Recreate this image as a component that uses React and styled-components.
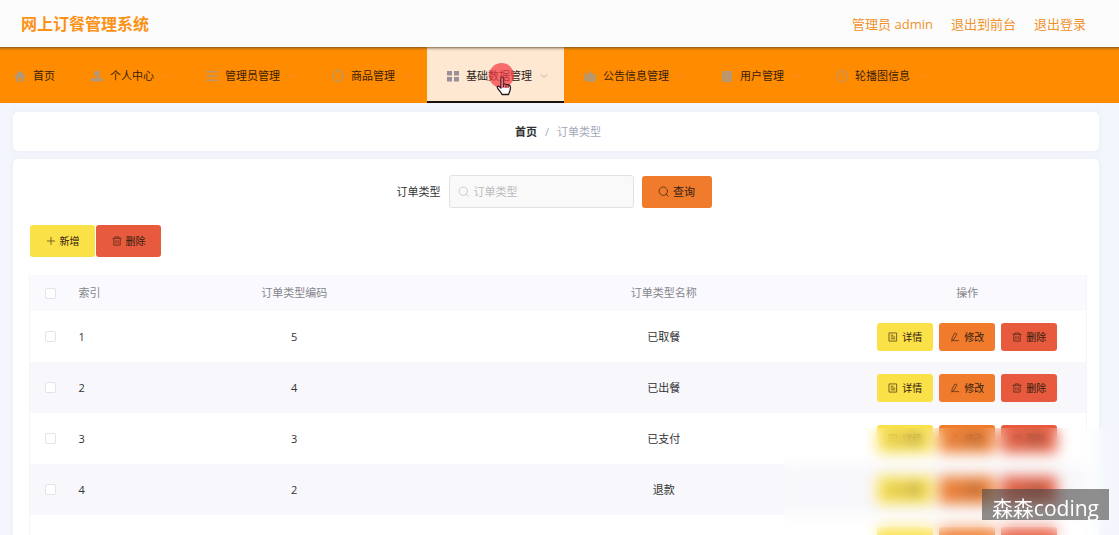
import React from "react";
import styled, { createGlobalStyle, css } from "styled-components";

const Global = createGlobalStyle`
  * { box-sizing: border-box; }
  body {
    margin: 0;
    background: #f3f6fc;
    color: #333;
    font: 11px/16px "Open Sans", "Noto Sans CJK SC", sans-serif;
  }
  a { color: inherit; text-decoration: none; }
  button, input { font: inherit; color: inherit; }
`;

const Shell = styled.div`
  height: 100vh;
  overflow: hidden;
`;

const Header = styled.header`
  display: flex;
  align-items: center;
  justify-content: space-between;
  height: 47px;
  padding: 0 33px 0 21px;
  background: #fdfcfd;
  color: #f0922b;
`;

const Title = styled.h1`
  margin: 0;
  font-size: 16px;
  line-height: 24px;
  font-weight: 700;
  color: #fb9216;
`;

const Account = styled.div`
  display: flex;
  gap: 18px;
  font-size: 13px;
  line-height: 20px;
`;

const Nav = styled.nav`
  display: flex;
  height: 56px;
  background: linear-gradient(#8a5a1c, #e07d08 2px, #ff8c00 4px);
`;

const NavItem = styled.a`
  position: relative;
  display: flex;
  align-items: center;
  flex: none;
  padding: 2px 16px 0 ${(p) => (p.$first ? 13 : 19)}px;
  color: #3a1d08;
  white-space: nowrap;
  ${(p) =>
    p.$active &&
    css`
      background: linear-gradient(transparent 54px, #1b1210 54px),
        linear-gradient(#8a7358, #e2cbb3 2px, #ffe8d1 4px);
      color: #2d2422;
    `}
`;

const NavIcon = styled.svg`
  width: 14px;
  height: 14px;
  margin-right: 6px;
  color: ${(p) => (p.$active ? "#9a8f9b" : "#b79672")};
`;

const Chevron = styled.svg`
  width: 8px;
  height: 8px;
  margin-left: 8px;
  color: ${(p) => (p.$active ? "#c3aa9b" : "#f98f2c")};
`;

const ClickDot = styled.span`
  position: absolute;
  top: 16px;
  left: 62px;
  width: 25px;
  height: 25px;
  border-radius: 50%;
  background: rgba(245, 55, 65, 0.7);
`;

const Pointer = styled.svg`
  position: absolute;
  top: 29px;
  left: 69px;
  width: 16px;
  height: 20px;
`;

const Main = styled.main`
  display: flex;
  flex-direction: column;
  gap: 8px;
  padding: 9px 20px 0 13px;
`;

const Card = styled.section`
  border-radius: 5px;
  background: #fff;
  box-shadow: 0 0 5px rgba(225, 232, 240, 0.5);
`;

const Crumbs = styled(Card)`
  display: flex;
  align-items: center;
  justify-content: center;
  gap: 8px;
  height: 39px;
  padding-left: 4px;
  color: #a3a7b8;
`;

const HomeLink = styled.a`
  font-weight: 700;
  color: #303133;
`;

const Panel = styled(Card)`
  padding: 16px 12px 0 16px;
`;

const SearchForm = styled.form`
  display: flex;
  align-items: center;
  justify-content: center;
  gap: 8px;
  height: 33px;
  padding-right: 8px;
`;

const SearchBox = styled.div`
  display: flex;
  align-items: center;
  gap: 5px;
  width: 185px;
  height: 33px;
  padding: 0 8px;
  border: 1px solid #e3e1e1;
  border-radius: 3px;
  background: #faf9f9;
  color: #b9babf;
`;

const SearchInput = styled.input`
  flex: 1;
  min-width: 0;
  padding: 0;
  border: 0;
  outline: 0;
  background: none;
  &::placeholder { color: #b9babf; }
`;

const fills = { yellow: "#fbe148", orange: "#f07b2c", red: "#e85a3d" };
const sizes = {
  search: css`width: 70px; height: 32px; font-size: 11px;`,
  tool: css`width: 65px; height: 32px; font-size: 10px;`,
  row: css`width: 56px; height: 28px; font-size: 10px;`,
};

const Button = styled.button`
  display: flex;
  align-items: center;
  justify-content: center;
  gap: 4px;
  padding: 0;
  border: 0;
  border-radius: 3px;
  background: ${(p) => fills[p.$fill]};
  color: #33200f;
  white-space: nowrap;
  cursor: pointer;
  ${(p) => sizes[p.$size]}
`;

const SmallIcon = styled.svg`
  flex: none;
  width: ${(p) => p.$size || 10}px;
  height: ${(p) => p.$size || 10}px;
  opacity: 0.7;
`;

const Toolbar = styled.div`
  display: flex;
  gap: 1px;
  margin: 17px 0 18px 1px;
`;

const Table = styled.table`
  width: 100%;
  table-layout: fixed;
  border-collapse: collapse;
  border-left: 1px solid #f5f4f9;
  border-right: 1px solid #f5f4f9;
`;

const HeadRow = styled.tr`
  height: 36px;
  background: #faf9fd;
  color: #85868c;
`;

const Row = styled.tr`
  height: 51px;
  background: ${(p) => (p.$striped ? "#f8f7fb" : "#fff")};
`;

const cell = css`
  padding: 0 7px;
  font-weight: 400;
  text-align: ${(p) => (p.$left ? "left" : "center")};
  width: ${(p) => (p.$width ? `${p.$width}px` : "auto")};
`;
const Th = styled.th`${cell}`;
const Td = styled.td`${cell}`;

const Check = styled.input`
  display: block;
  appearance: none;
  width: 11px;
  height: 11px;
  margin: 0 auto;
  border: 1px solid #e4e3ea;
  border-radius: 2px;
  background: #fff;
`;

const Actions = styled.div`
  display: flex;
  justify-content: center;
  gap: 6px;
`;

const Haze = styled.div`
  position: fixed;
  right: 0;
  bottom: 0;
  width: 30%;
  height: 20vh;
  background: rgba(255, 255, 255, 0.08);
  backdrop-filter: blur(7px);
`;

const Badge = styled.div`
  position: fixed;
  right: 10px;
  bottom: 15px;
  height: 31px;
  padding: 5px 10px 0;
  background: rgba(70, 70, 70, 0.6);
  color: #fff;
  font-size: 21px;
  line-height: 28px;
`;

const stroke = { fill: "none", stroke: "currentColor", strokeLinecap: "round", strokeLinejoin: "round" };

const navShapes = {
  home: <path fill="currentColor" d="M7 1.500 1 7l1 1 .8-.7V13h3V9h2.400v4h3V7.300l.8.700 1-1z" />,
  user: (
    <g fill="currentColor">
      <circle cx="7" cy="4.500" r="3" />
      <path d="M5.500 7h3v2H13v3.500H1V9h4.500z" />
    </g>
  ),
  list: <path {...stroke} strokeWidth="1.500" d="M1.500 2.800h11M1.500 7h11M1.500 11.200h11" />,
  compass: (
    <g {...stroke}>
      <circle cx="7" cy="7" r="5.700" />
      <path d="M7 1.300v3M7 9.700v3M1.300 7h3M9.700 7h3" />
    </g>
  ),
  grid: <path fill="currentColor" d="M1 2h5v4.500H1zM8 2h5v4.500H8zM1 8h5v4.500H1zM8 8h5v4.500H8z" />,
  notice: <path fill="currentColor" d="M1 4h3v8H1zM4.500 5.500 9 1.500V5h3.500v2.500l.5 2L11.500 13H6l-1.500-1z" />,
  book: (
    <g>
      <rect x="2" y="2" width="10" height="11" rx="1" fill="currentColor" />
      <path d="M4.500 4.500h5M4.500 10.500h5" stroke="#d69353" />
    </g>
  ),
  help: (
    <g {...stroke}>
      <circle cx="7" cy="7" r="5.700" />
      <path d="M5 5.200c.3-2 4-1.800 3.900.2C8.800 6.700 7 6.800 7 8.500M7 10.300v.2" />
    </g>
  ),
};

const smallShapes = {
  search: <path {...stroke} d="M9.500 5.200a4.200 4.200 0 1 1-8.400 0 4.200 4.200 0 0 1 8.400 0ZM8.300 8.200l1.800 2" />,
  plus: <path {...stroke} d="M5.500 1.500v8M1.500 5.500h8" />,
  trash: <path {...stroke} d="M1 2.500h9M3.500 2.500V1h4v1.500M2 2.500V10h7V2.500M4.300 5v2.800M6.700 5v2.800" />,
  detail: <path {...stroke} d="M1.500 1h8v9h-8zM3.500 3.500h2M3.500 5.500h4M3.500 7.500h4" />,
  edit: <path {...stroke} d="M2 9.500 2.500 6 5.500 1l2.200 1.300-3 5zM2 9.500h7.500" />,
};

function Icon({ name, size }) {
  return (
    <SmallIcon $size={size} viewBox="0 0 11 11" aria-hidden="true">
      {smallShapes[name]}
    </SmallIcon>
  );
}

const menu = [
  { label: "首页", icon: "home" },
  { label: "个人中心", icon: "user" },
  { label: "管理员管理", icon: "list" },
  { label: "商品管理", icon: "compass" },
  { label: "基础数据管理", icon: "grid", active: true },
  { label: "公告信息管理", icon: "notice" },
  { label: "用户管理", icon: "book" },
  { label: "轮播图信息", icon: "help" },
];

const rows = [
  { id: 1, code: 5, name: "已取餐" },
  { id: 2, code: 4, name: "已出餐" },
  { id: 3, code: 3, name: "已支付" },
  { id: 4, code: 2, name: "退款" },
  { id: 5, code: 1, name: "" },
];

export default function App() {
  return (
    <Shell>
      <Global />
      <Header>
        <Title>网上订餐管理系统</Title>
        <Account>
          <span>管理员 admin</span>
          <a href="#front">退出到前台</a>
          <a href="#logout">退出登录</a>
        </Account>
      </Header>
      <Nav>
        {menu.map(({ label, icon, active }, i) => (
          <NavItem key={label} href={`#${icon}`} $first={i === 0} $active={active}>
            <NavIcon viewBox="0 0 14 14" $active={active} aria-hidden="true">
              {navShapes[icon]}
            </NavIcon>
            {label}
            {i > 0 && (
              <Chevron viewBox="0 0 8 8" $active={active} aria-hidden="true">
                <path {...stroke} d="M1 2.500 4 5.500 7 2.500" />
              </Chevron>
            )}
            {active && (
              <>
                <ClickDot />
                <Pointer viewBox="0 0 16 20" aria-hidden="true">
                  <path
                    d="M5 12V3c0-2 2.500-2 2.500 0v5l5 1c1.500.3 2 1 2 2.500 0 3-1 4.500-2 7H6C5 16 2.500 14 1.500 12c-.8-1.700 1-2.300 2-1.200z"
                    fill="#fff"
                    stroke="#2b1a1c"
                    strokeWidth="1.300"
                    strokeLinejoin="round"
                  />
                  <path d="M5 1.500h2.500V8l5 1v3H5z" fill="#e4505a" opacity=".75" />
                  <path d="M7.500 8v3M10 8.500v3M12.300 9v2.500" stroke="#5b2028" fill="none" />
                </Pointer>
              </>
            )}
          </NavItem>
        ))}
      </Nav>
      <Main>
        <Crumbs>
          <HomeLink href="#home">首页</HomeLink>
          <span>/</span>
          <span>订单类型</span>
        </Crumbs>
        <Panel>
          <SearchForm onSubmit={(e) => e.preventDefault()}>
            <label htmlFor="type">订单类型</label>
            <SearchBox>
              <Icon name="search" size={11} />
              <SearchInput id="type" placeholder="订单类型" />
            </SearchBox>
            <Button $fill="orange" $size="search">
              <Icon name="search" size={11} />
              查询
            </Button>
          </SearchForm>
          <Toolbar>
            <Button type="button" $fill="yellow" $size="tool">
              <Icon name="plus" />
              新增
            </Button>
            <Button type="button" $fill="red" $size="tool">
              <Icon name="trash" />
              删除
            </Button>
          </Toolbar>
          <Table>
            <thead>
              <HeadRow>
                <Th $width={42}>
                  <Check type="checkbox" aria-label="全选" />
                </Th>
                <Th $width={38} $left>索引</Th>
                <Th>订单类型编码</Th>
                <Th>订单类型名称</Th>
                <Th $width={238}>操作</Th>
              </HeadRow>
            </thead>
            <tbody>
              {rows.map((row, i) => (
                <Row key={row.id} $striped={i % 2 === 1}>
                  <Td>
                    <Check type="checkbox" aria-label={`选择 ${row.id}`} />
                  </Td>
                  <Td $left>{row.id}</Td>
                  <Td>{row.code}</Td>
                  <Td>{row.name}</Td>
                  <Td>
                    <Actions>
                      <Button type="button" $fill="yellow" $size="row">
                        <Icon name="detail" />
                        详情
                      </Button>
                      <Button type="button" $fill="orange" $size="row">
                        <Icon name="edit" />
                        修改
                      </Button>
                      <Button type="button" $fill="red" $size="row">
                        <Icon name="trash" />
                        删除
                      </Button>
                    </Actions>
                  </Td>
                </Row>
              ))}
            </tbody>
          </Table>
        </Panel>
      </Main>
      <Haze />
      <Badge>森森coding</Badge>
    </Shell>
  );
}
